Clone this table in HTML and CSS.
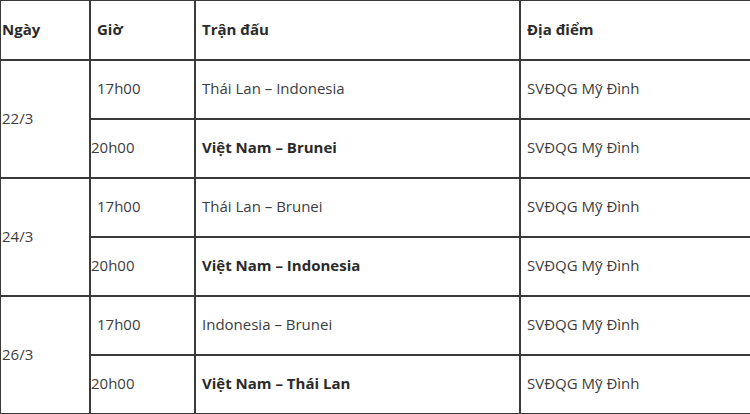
FILE: index.html
```html
<!DOCTYPE html>
<html lang="vi">
<head>
<meta charset="utf-8">
<title>Lịch thi đấu</title>
<link rel="stylesheet" href="styles.css">
</head>
<body>
<table class="schedule">
  <colgroup>
    <col class="c-date">
    <col class="c-time">
    <col class="c-match">
    <col class="c-venue">
  </colgroup>
  <thead>
    <tr class="head">
      <th class="date">Ngày</th>
      <th>Giờ</th>
      <th>Trận đấu</th>
      <th>Địa điểm</th>
    </tr>
  </thead>
  <tbody>
    <tr>
      <td class="date" rowspan="2">22/3</td>
      <td>17h00</td>
      <td>Thái Lan – Indonesia</td>
      <td>SVĐQG Mỹ Đình</td>
    </tr>
    <tr>
      <td class="flush">20h00</td>
      <td><strong>Việt Nam – Brunei</strong></td>
      <td>SVĐQG Mỹ Đình</td>
    </tr>
    <tr>
      <td class="date" rowspan="2">24/3</td>
      <td>17h00</td>
      <td>Thái Lan – Brunei</td>
      <td>SVĐQG Mỹ Đình</td>
    </tr>
    <tr>
      <td class="flush">20h00</td>
      <td><strong>Việt Nam – Indonesia</strong></td>
      <td>SVĐQG Mỹ Đình</td>
    </tr>
    <tr>
      <td class="date" rowspan="2">26/3</td>
      <td>17h00</td>
      <td>Indonesia – Brunei</td>
      <td>SVĐQG Mỹ Đình</td>
    </tr>
    <tr>
      <td class="flush">20h00</td>
      <td><strong>Việt Nam – Thái Lan</strong></td>
      <td>SVĐQG Mỹ Đình</td>
    </tr>
  </tbody>
</table>
</body>
</html>
```
FILE: styles.css
```css
html, body {
  margin: 0;
  padding: 0;
  background: #fff;
  overflow: hidden;
}
body {
  font-family: "Open Sans", "Noto Sans", sans-serif;
  font-size: 15px;
  color: #3d3d3d;
}
.schedule {
  border-collapse: collapse;
  table-layout: fixed;
  width: 799px;
  margin-left: -1px;
  margin-top: -1px;
}
.c-date { width: 90px; }
.c-time { width: 105px; }
.c-match { width: 325px; }
.c-venue { width: 279px; }
.schedule th,
.schedule td {
  border: 2px solid #3a3a3a;
  padding: 0 0 3px 6px;
  text-align: left;
  vertical-align: middle;
  height: 54px;
}
.schedule th {
  font-weight: 700;
  color: #2a2a2a;
  height: 55px;
}
.schedule strong {
  font-weight: 700;
  color: #2a2a2a;
}
.schedule .date {
  padding-left: 1px;
}
.schedule .flush {
  padding-left: 0;
}
```
